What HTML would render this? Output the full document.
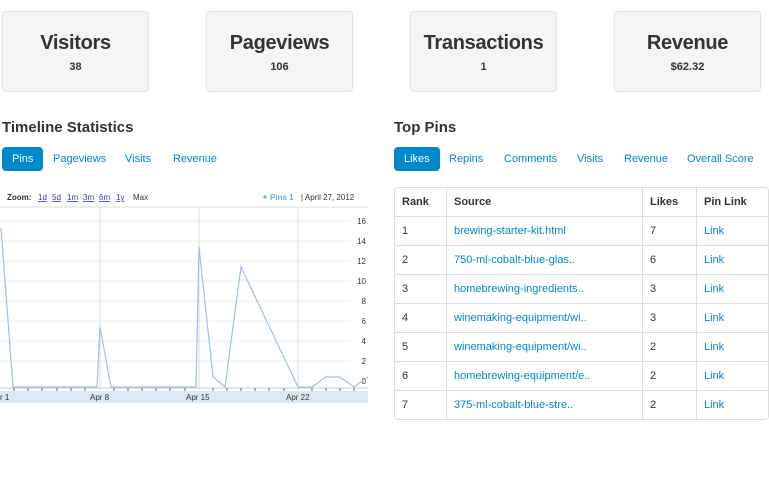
<!DOCTYPE html>
<html><head><style>
body{margin:0;width:769px;height:500px;background:#fff;font-family:"Liberation Sans",Arial,sans-serif;color:#333;position:relative;overflow:hidden}
.card{position:absolute;top:11px;width:145px;height:79px;background:#f5f5f5;border:1px solid #e3e3e3;border-radius:4px;text-align:center}
.card h2{margin:20px 0 0;font-size:20px;font-weight:bold;color:#333;letter-spacing:-0.3px}
.card div{font-size:11px;font-weight:bold;margin-top:6px}
h3{position:absolute;margin:0;font-size:15px;font-weight:bold;top:119px}
.tabs{position:absolute;top:147px;font-size:11px;color:#0088cc;height:24px}
.tabs span{position:absolute;top:6px;white-space:nowrap}
.tabs .a{background:#0088cc;color:#fff;border-radius:4px;top:0;padding:6px 10px;height:12px}
table{position:absolute;left:394px;top:187px;width:375px;border-collapse:separate;border-spacing:0;border:1px solid #ddd;border-radius:4px;font-size:11px}
td,th{height:28px;padding:0 7px;text-align:left;border-top:1px solid #ddd;border-left:1px solid #ddd}
th{border-top:0;font-weight:bold}
tr td:first-child,tr th:first-child{border-left:0}
a{color:#0088cc;text-decoration:none}
</style></head><body>
<div class="card" style="left:2px"><h2>Visitors</h2><div>38</div></div>
<div class="card" style="left:206px"><h2>Pageviews</h2><div>106</div></div>
<div class="card" style="left:410px"><h2>Transactions</h2><div>1</div></div>
<div class="card" style="left:614px"><h2>Revenue</h2><div>$62.32</div></div>

<h3 style="left:2px">Timeline Statistics</h3>
<h3 style="left:394px">Top Pins</h3>
<div class="tabs" style="left:2px"><span class="a" style="left:0">Pins</span><span style="left:51px">Pageviews</span><span style="left:123px">Visits</span><span style="left:171px">Revenue</span></div>
<div class="tabs" style="left:394px"><span class="a" style="left:0">Likes</span><span style="left:55px">Repins</span><span style="left:110px">Comments</span><span style="left:183px">Visits</span><span style="left:230px">Revenue</span><span style="left:293px">Overall Score</span></div>

<svg style="position:absolute;left:0;top:185px" width="380" height="225" font-family="Liberation Sans,Arial,sans-serif" font-size="8">
<text x="7" y="15" font-weight="bold" fill="#333">Zoom:</text>
<g fill="#33c" text-decoration="underline"><text x="38" y="15">1d</text><text x="52" y="15">5d</text><text x="67" y="15">1m</text><text x="83" y="15">3m</text><text x="99" y="15">6m</text><text x="116" y="15">1y</text></g>
<text x="133" y="15" fill="#333">Max</text>
<circle cx="265" cy="12" r="1.6" fill="#6fa8e8"/>
<text x="270" y="15" fill="#6fa8e8" font-weight="bold">Pins 1</text>
<text x="301" y="15" fill="#333">| April 27, 2012</text>
<g stroke="#eee"><line x1="0" y1="36" x2="350" y2="36"/><line x1="0" y1="56" x2="350" y2="56"/><line x1="0" y1="76" x2="350" y2="76"/><line x1="0" y1="96" x2="350" y2="96"/><line x1="0" y1="116" x2="350" y2="116"/><line x1="0" y1="136" x2="350" y2="136"/><line x1="0" y1="156" x2="350" y2="156"/><line x1="0" y1="176" x2="350" y2="176"/></g>
<line x1="0" y1="22" x2="368" y2="22" stroke="#ddd"/>
<g stroke="#ddd"><line x1="100" y1="22" x2="100" y2="205"/><line x1="199" y1="22" x2="199" y2="205"/><line x1="298" y1="22" x2="298" y2="205"/></g>
<g fill="#333" text-anchor="end"><text x="366" y="39">16</text><text x="366" y="59">14</text><text x="366" y="79">12</text><text x="366" y="99">10</text><text x="366" y="119">8</text><text x="366" y="139">6</text><text x="366" y="159">4</text><text x="366" y="179">2</text><text x="366" y="199">0</text></g>
<rect x="0" y="206" width="368" height="12" fill="#dbe8f5"/>
<line x1="0" y1="203" x2="368" y2="203" stroke="#ccc"/>
<g stroke="#666"><path d="M14 203v3M28 203v3M42 203v3M57 203v3M71 203v3M85 203v3M114 203v3M128 203v3M142 203v3M156 203v3M170 203v3M185 203v3M213 203v3M227 203v3M241 203v3M255 203v3M269 203v3M284 203v3M312 203v3M326 203v3M340 203v3M354 203v3"/></g>
<g fill="#333"><text x="0" y="215">r 1</text><text x="90" y="215">Apr 8</text><text x="186" y="215">Apr 15</text><text x="286" y="215">Apr 22</text></g>
<polyline fill="none" stroke="#9cc0ea" stroke-width="1.2" points="1,43 13,202 97,202 100,142 111,202 196,202 199,62 213,192 225,202 241,82 298,202 312,202 326,192 340,192 354,202 368,192"/>
</svg>

<table>
<tr><th style="width:37px">Rank</th><th style="width:181px">Source</th><th style="width:39px">Likes</th><th>Pin Link</th></tr>
<tr><td>1</td><td><a>brewing-starter-kit.html</a></td><td>7</td><td><a>Link</a></td></tr>
<tr><td>2</td><td><a>750-ml-cobalt-blue-glas..</a></td><td>6</td><td><a>Link</a></td></tr>
<tr><td>3</td><td><a>homebrewing-ingredients..</a></td><td>3</td><td><a>Link</a></td></tr>
<tr><td>4</td><td><a>winemaking-equipment/wi..</a></td><td>3</td><td><a>Link</a></td></tr>
<tr><td>5</td><td><a>winemaking-equipment/wi..</a></td><td>2</td><td><a>Link</a></td></tr>
<tr><td>6</td><td><a>homebrewing-equipment/e..</a></td><td>2</td><td><a>Link</a></td></tr>
<tr><td>7</td><td><a>375-ml-cobalt-blue-stre..</a></td><td>2</td><td><a>Link</a></td></tr>
</table>
</body></html>
